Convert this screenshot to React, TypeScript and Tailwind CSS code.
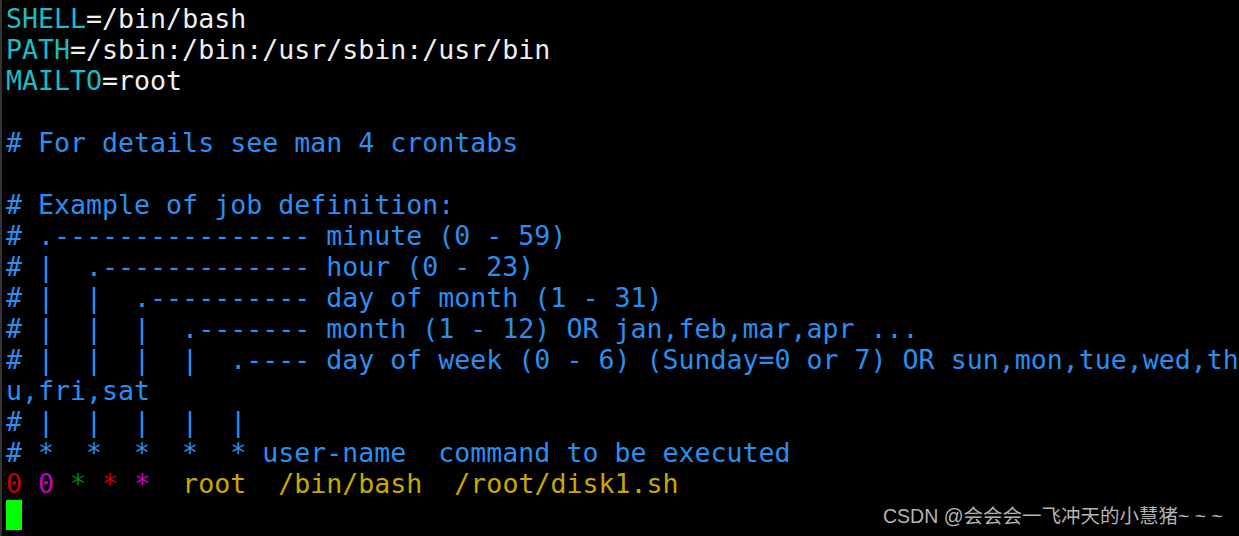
const CYAN = "text-[#1cbcc4]";
const WHITE = "text-[#f0f0f0]";
const BLUE = "text-[#2a8ff2]";
const YELLOW = "text-[#c9a800]";

type Seg = { t: string; c: string };

const lines: Seg[][] = [
  [{ t: "SHELL", c: CYAN }, { t: "=/bin/bash", c: WHITE }],
  [{ t: "PATH", c: CYAN }, { t: "=/sbin:/bin:/usr/sbin:/usr/bin", c: WHITE }],
  [{ t: "MAILTO", c: CYAN }, { t: "=root", c: WHITE }],
  [],
  [{ t: "# For details see man 4 crontabs", c: BLUE }],
  [],
  [{ t: "# Example of job definition:", c: BLUE }],
  [{ t: "# .---------------- minute (0 - 59)", c: BLUE }],
  [{ t: "# |  .------------- hour (0 - 23)", c: BLUE }],
  [{ t: "# |  |  .---------- day of month (1 - 31)", c: BLUE }],
  [{ t: "# |  |  |  .------- month (1 - 12) OR jan,feb,mar,apr ...", c: BLUE }],
  [{ t: "# |  |  |  |  .---- day of week (0 - 6) (Sunday=0 or 7) OR sun,mon,tue,wed,th", c: BLUE }],
  [{ t: "u,fri,sat", c: BLUE }],
  [{ t: "# |  |  |  |  |", c: BLUE }],
  [{ t: "# *  *  *  *  * user-name  command to be executed", c: BLUE }],
  [
    { t: "0", c: "text-[#c80000]" },
    { t: " ", c: WHITE },
    { t: "0", c: "text-[#c800c8]" },
    { t: " ", c: WHITE },
    { t: "*", c: "text-[#0a7a0a]" },
    { t: " ", c: WHITE },
    { t: "*", c: "text-[#c80000]" },
    { t: " ", c: WHITE },
    { t: "*", c: "text-[#c800c8]" },
    { t: "  root  /bin/bash  /root/disk1.sh", c: YELLOW },
  ],
];

export default function App() {
  return (
    <div className="relative h-[536px] w-[1239px] overflow-hidden bg-black border-l-2 border-[#333333]">
      <div
        className="pl-[4px] pt-[3px] whitespace-pre text-[26.6px] leading-[31px]"
        style={{ fontFamily: '"DejaVu Sans Mono", monospace' }}
      >
        {lines.map((segs, i) => (
          <div key={i} className="h-[31px]">
            {segs.map((s, j) => (
              <span key={j} className={s.c}>
                {s.t}
              </span>
            ))}
          </div>
        ))}
        <div className="h-[31px] flex items-center">
          <div className="w-[16px] h-[30px] bg-[#00ff00]" />
        </div>
      </div>
      <div
        className="absolute right-[16px] bottom-[9px] text-[19.5px] leading-[22px] text-[#b4b4b4]"
        style={{ fontFamily: '"Liberation Sans", "Noto Sans CJK SC", sans-serif' }}
      >
        CSDN @会会会一飞冲天的小慧猪~ ~ ~
      </div>
    </div>
  );
}
